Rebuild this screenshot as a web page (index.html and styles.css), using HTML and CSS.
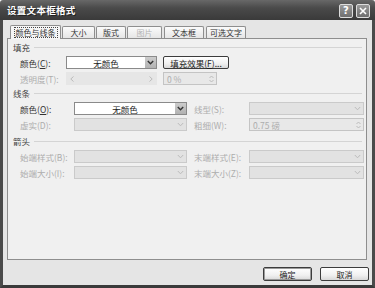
FILE: index.html
```html
<!DOCTYPE html>
<html>
<head>
<meta charset="utf-8">
<link rel="stylesheet" href="styles.css">
</head>
<body>
<div class="dialog">
  <div class="titlebar">
    <span class="title">设置文本框格式</span>
    <span class="caption-btns">
      <span class="cap-btn">?</span>
      <span class="cap-btn">
        <svg width="8" height="8" viewBox="0 0 8 8"><path d="M1 1 L7 7 M7 1 L1 7" stroke="#fff" stroke-width="1.6"/></svg>
      </span>
    </span>
  </div>
  <div class="frame">
    <div class="tabs">
      <span class="tab tab-active"><span class="focus">颜色与线条</span></span>
      <span class="tab">大小</span>
      <span class="tab">版式</span>
      <span class="tab tab-disabled">图片</span>
      <span class="tab">文本框</span>
      <span class="tab">可选文字</span>
    </div>
    <div class="panel">
      <div class="section">
        <div class="heading"><span>填充</span></div>
        <div class="row">
          <span class="lbl lbl-fill">颜色(<u>C</u>):</span>
          <div class="select sel-fill">
            <span class="value">无颜色</span>
            <span class="arrow"><svg width="7" height="5" viewBox="0 0 7 5"><path d="M0.8 1 L3.5 3.8 L6.2 1" fill="none" stroke="#333" stroke-width="1.4"/></svg></span>
          </div>
          <span class="btn btn-effect">填充效果(<u>F</u>)...</span>
        </div>
        <div class="row">
          <span class="lbl lbl-fill off">透明度(T):</span>
          <div class="slider">
            <svg width="4" height="6" viewBox="0 0 4 6"><path d="M3.5 0.5 L0.8 3 L3.5 5.5" fill="none" stroke="#bbb" stroke-width="1"/></svg>
            <svg width="4" height="6" viewBox="0 0 4 6"><path d="M0.5 0.5 L3.2 3 L0.5 5.5" fill="none" stroke="#bbb" stroke-width="1"/></svg>
          </div>
          <div class="spin spin-pct">
            <span class="value off">0 %</span>
            <span class="spin-arrows"><svg width="5" height="8" viewBox="0 0 5 8"><path d="M0.5 3 L2.5 1 L4.5 3 M0.5 5 L2.5 7 L4.5 5" fill="none" stroke="#bbb" stroke-width="1"/></svg></span>
          </div>
        </div>
      </div>
      <div class="section section-lines">
        <div class="heading"><span>线条</span></div>
        <div class="row">
          <span class="lbl">颜色(<u>O</u>):</span>
          <div class="select sel-wide">
            <span class="value">无颜色</span>
            <span class="arrow"><svg width="7" height="5" viewBox="0 0 7 5"><path d="M0.8 1 L3.5 3.8 L6.2 1" fill="none" stroke="#333" stroke-width="1.4"/></svg></span>
          </div>
          <span class="lbl lbl-right off">线型(S):</span>
          <div class="select sel-right disabled">
            <span class="value"></span>
            <span class="arrow"><svg width="7" height="5" viewBox="0 0 7 5"><path d="M0.8 1 L3.5 3.8 L6.2 1" fill="none" stroke="#bbb" stroke-width="1"/></svg></span>
          </div>
        </div>
        <div class="row">
          <span class="lbl off">虚实(D):</span>
          <div class="select sel-wide disabled">
            <span class="value"></span>
            <span class="arrow"><svg width="7" height="5" viewBox="0 0 7 5"><path d="M0.8 1 L3.5 3.8 L6.2 1" fill="none" stroke="#bbb" stroke-width="1"/></svg></span>
          </div>
          <span class="lbl lbl-right off">粗细(W):</span>
          <div class="spin sel-right">
            <span class="value off">0.75 磅</span>
            <span class="spin-arrows"><svg width="5" height="8" viewBox="0 0 5 8"><path d="M0.5 3 L2.5 1 L4.5 3 M0.5 5 L2.5 7 L4.5 5" fill="none" stroke="#bbb" stroke-width="1"/></svg></span>
          </div>
        </div>
      </div>
      <div class="section">
        <div class="heading"><span>箭头</span></div>
        <div class="row">
          <span class="lbl off">始端样式(B):</span>
          <div class="select sel-wide disabled">
            <span class="value"></span>
            <span class="arrow"><svg width="7" height="5" viewBox="0 0 7 5"><path d="M0.8 1 L3.5 3.8 L6.2 1" fill="none" stroke="#bbb" stroke-width="1"/></svg></span>
          </div>
          <span class="lbl lbl-right off">末端样式(E):</span>
          <div class="select sel-right disabled">
            <span class="value"></span>
            <span class="arrow"><svg width="7" height="5" viewBox="0 0 7 5"><path d="M0.8 1 L3.5 3.8 L6.2 1" fill="none" stroke="#bbb" stroke-width="1"/></svg></span>
          </div>
        </div>
        <div class="row">
          <span class="lbl off">始端大小(I):</span>
          <div class="select sel-wide disabled">
            <span class="value"></span>
            <span class="arrow"><svg width="7" height="5" viewBox="0 0 7 5"><path d="M0.8 1 L3.5 3.8 L6.2 1" fill="none" stroke="#bbb" stroke-width="1"/></svg></span>
          </div>
          <span class="lbl lbl-right off">末端大小(Z):</span>
          <div class="select sel-right disabled">
            <span class="value"></span>
            <span class="arrow"><svg width="7" height="5" viewBox="0 0 7 5"><path d="M0.8 1 L3.5 3.8 L6.2 1" fill="none" stroke="#bbb" stroke-width="1"/></svg></span>
          </div>
        </div>
      </div>
    </div>
    <div class="actions">
      <span class="btn btn-action btn-default">确定</span>
      <span class="btn btn-action">取消</span>
    </div>
  </div>
</div>
</body>
</html>
```

FILE: styles.css
```css
body {
  margin: 0;
  padding: 0;
  background: #fff;
  font-family: "Noto Sans CJK SC", "DejaVu Sans", sans-serif;
  font-size: 8.5px;
  color: #222;
}

.dialog {
  width: 375px;
  height: 288px;
  display: flex;
  flex-direction: column;
}

.titlebar {
  height: 20px;
  flex: none;
  display: flex;
  align-items: center;
  justify-content: space-between;
  padding: 0 5px 0 7px;
  background: linear-gradient(#686868, #4a4a4a 40%, #3a3a3a);
  border-radius: 3px 3px 0 0;
}

.title {
  color: #fff;
  font-weight: bold;
  font-size: 9.5px;
  letter-spacing: 0.3px;
  text-shadow: 1px 1px 0 #222;
}

.caption-btns {
  display: flex;
  gap: 3px;
  margin-top: 2px;
}

.cap-btn {
  width: 12px;
  height: 12px;
  display: flex;
  align-items: center;
  justify-content: center;
  border: 1px solid #ddd;
  border-radius: 2px;
  background: linear-gradient(#9a9a9a, #6e6e6e);
  color: #fff;
  font-family: "DejaVu Sans", sans-serif;
  font-weight: bold;
  font-size: 10px;
  line-height: 1;
}

.frame {
  flex: 1;
  display: flex;
  flex-direction: column;
  background: #e5e5e5;
  border-left: 3px solid #4a4a4a;
  border-right: 3px solid #4a4a4a;
  border-bottom: 3px solid #3a3a3a;
  padding: 4px 4px 0 4px;
}

.tabs {
  display: flex;
  align-items: flex-end;
  height: 13px;
  padding-left: 3px;
  margin-top: 1px;
}

.tab {
  height: 12px;
  box-sizing: border-box;
  display: flex;
  align-items: center;
  justify-content: center;
  border: 1px solid #8e8e8e;
  border-bottom: none;
  border-radius: 2px 2px 0 0;
  background: linear-gradient(#fbfbfb, #e6e6e6);
  margin-right: 1px;
  font-size: 8px;
  color: #333;
}

.tab:nth-child(1) { width: 51px; }
.tab:nth-child(2) { width: 33px; }
.tab:nth-child(3) { width: 30px; }
.tab:nth-child(4) { width: 35px; }
.tab:nth-child(5) { width: 40px; margin-left: 1px; }
.tab:nth-child(6) { width: 40px; margin-left: 1px; }

.tab-active {
  height: 14px;
  background: #f6f6f6;
  position: relative;
  top: 1px;
  z-index: 1;
}

.focus {
  outline: 1px dotted #444;
  padding: 0 1px;
  line-height: 9px;
}

.tab-disabled {
  color: #b4b4b4;
}

.panel {
  height: 222px;
  box-sizing: border-box;
  border: 1px solid #8e8e8e;
  background: #f0f0f0;
  padding: 3px 4px 0 5px;
  margin-right: 1px;
}

.section + .section {
  margin-top: 3px;
}

.section-lines {
  margin-bottom: 5px;
}

.heading {
  height: 10px;
  display: flex;
  align-items: center;
  gap: 4px;
  margin-bottom: 4px;
  color: #444;
}

.heading::after {
  content: "";
  flex: 1;
  border-top: 1px solid #d4d4d4;
}

.row {
  display: flex;
  align-items: center;
  height: 13px;
  padding-left: 7px;
  margin-bottom: 3px;
}

.lbl {
  width: 54px;
  flex: none;
  white-space: nowrap;
  color: #333;
}

.lbl u {
  text-decoration: underline;
}

.lbl-fill {
  width: 46px;
}

.lbl-right {
  width: 55px;
  margin-left: 7px;
}

.off {
  color: #adadad;
}

.select,
.spin,
.slider {
  height: 13px;
  box-sizing: border-box;
  display: flex;
  align-items: center;
  flex: none;
}

.select {
  border: 1px solid #8a8a8a;
  background: #fff;
}

.select .value {
  flex: 1;
  text-align: center;
  color: #222;
}

.select .arrow {
  width: 11px;
  height: 11px;
  display: flex;
  align-items: center;
  justify-content: center;
  background: linear-gradient(#cccccc, #b2b2b2);
}

.select.disabled {
  border-color: #cacaca;
  background: #e2e2e2;
}

.select.disabled .arrow {
  background: none;
}

.sel-fill {
  width: 91px;
}

.sel-wide {
  width: 113px;
}

.sel-right {
  width: 115px;
}

.slider {
  width: 91px;
  justify-content: space-between;
  padding: 0 4px;
  background: #e6e6e6;
}

.spin {
  border: 1px solid #c4c4c4;
  background: #e8e8e8;
  padding-left: 3px;
}

.spin .value {
  flex: 1;
}

.spin-arrows {
  width: 10px;
  display: flex;
  justify-content: center;
}

.spin-pct {
  width: 54px;
  margin-left: 6px;
}

.btn {
  box-sizing: border-box;
  display: flex;
  align-items: center;
  justify-content: center;
  border: 1px solid #3c3c3c;
  border-radius: 2px;
  background: linear-gradient(#ffffff, #f0f0f0 60%, #d8d8d8);
  color: #222;
}

.btn-effect {
  width: 66px;
  height: 13px;
  margin-left: 6px;
}

.actions {
  display: flex;
  justify-content: flex-end;
  gap: 8px;
  padding: 7px 0 0 0;
  margin-right: -1px;
}

.btn-action {
  width: 49px;
  height: 14px;
  font-size: 8px;
}

.btn-default {
  box-shadow: inset 0 0 0 1px #9a9a9a;
}
```
